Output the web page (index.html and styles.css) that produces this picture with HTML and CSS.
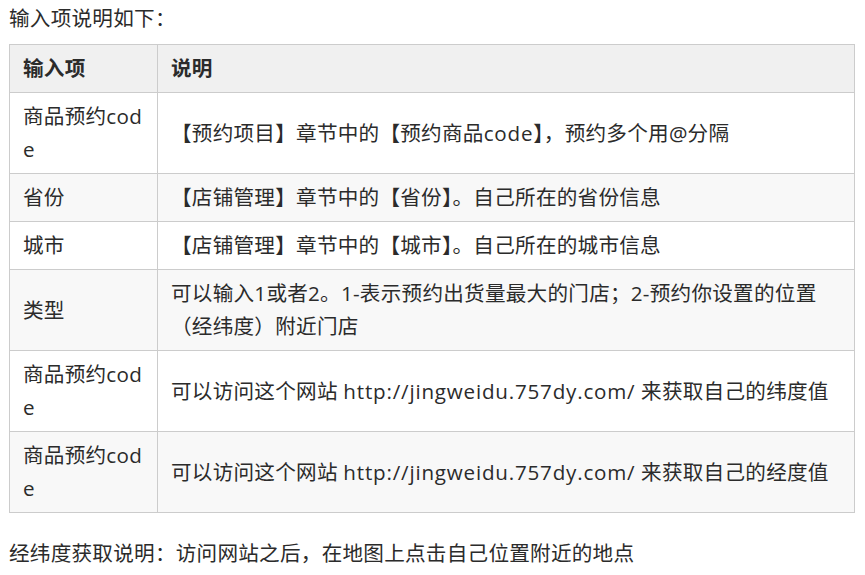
FILE: index.html
```html
<!DOCTYPE html>
<html lang="zh-CN">
<head>
    <meta charset="UTF-8">
    <meta name="viewport" content="width=device-width, initial-scale=1.0">
    <title>输入项说明</title>
    <link rel="stylesheet" href="styles.css">
</head>
<body>
    <div class="doc">
        <p class="intro">输入项说明如下：</p>

        <table class="params">
            <colgroup>
                <col class="col-name">
                <col>
            </colgroup>
            <thead>
                <tr>
                    <th>输入项</th>
                    <th>说明</th>
                </tr>
            </thead>
            <tbody>
                <tr>
                    <td>商品预约code</td>
                    <td>【预约项目】章节中的【预约商品<span class="en">code</span>】，预约多个用@分隔</td>
                </tr>
                <tr>
                    <td>省份</td>
                    <td>【店铺管理】章节中的【省份】。自己所在的省份信息</td>
                </tr>
                <tr>
                    <td>城市</td>
                    <td>【店铺管理】章节中的【城市】。自己所在的城市信息</td>
                </tr>
                <tr>
                    <td>类型</td>
                    <td>可以输入1或者2。1-表示预约出货量最大的门店；2-预约你设置的位置（经纬度）附近门店</td>
                </tr>
                <tr>
                    <td>商品预约code</td>
                    <td>可以访问这个网站 <span class="en">http://jingweidu.757dy.com/</span> 来获取自己的纬度值</td>
                </tr>
                <tr>
                    <td>商品预约code</td>
                    <td>可以访问这个网站 <span class="en">http://jingweidu.757dy.com/</span> 来获取自己的经度值</td>
                </tr>
            </tbody>
        </table>

        <p class="note">经纬度获取说明：访问网站之后，在地图上点击自己位置附近的地点</p>
    </div>
</body>
</html>
```

FILE: styles.css
```css
* {
    margin: 0;
    padding: 0;
    box-sizing: border-box;
}

body {
    background: #fff;
    color: #2b2b2b;
    font-family: "Open Sans", "Noto Sans CJK SC", sans-serif;
    font-size: 20.6px;
    letter-spacing: 0.25px;
}

.doc {
    width: 865px;
    padding: 3px 10px 0 9px;
}

.intro {
    line-height: 30px;
    margin-bottom: 11px;
}

.params {
    width: 100%;
    border-collapse: collapse;
    table-layout: fixed;
    line-height: 33px;
}

.col-name {
    width: 148px;
}

.params th,
.params td {
    border: 1px solid #ccc;
    padding: 7px 12px 7px 13px;
    text-align: left;
    vertical-align: middle;
    word-break: break-all;
}

.params th {
    background: #f0f0f0;
    font-weight: bold;
}

.params tbody tr:nth-child(even) td {
    background: #f8f8f8;
}

.en {
    letter-spacing: 0.8px;
}

.note {
    margin-top: 24px;
    line-height: 32px;
}
```
